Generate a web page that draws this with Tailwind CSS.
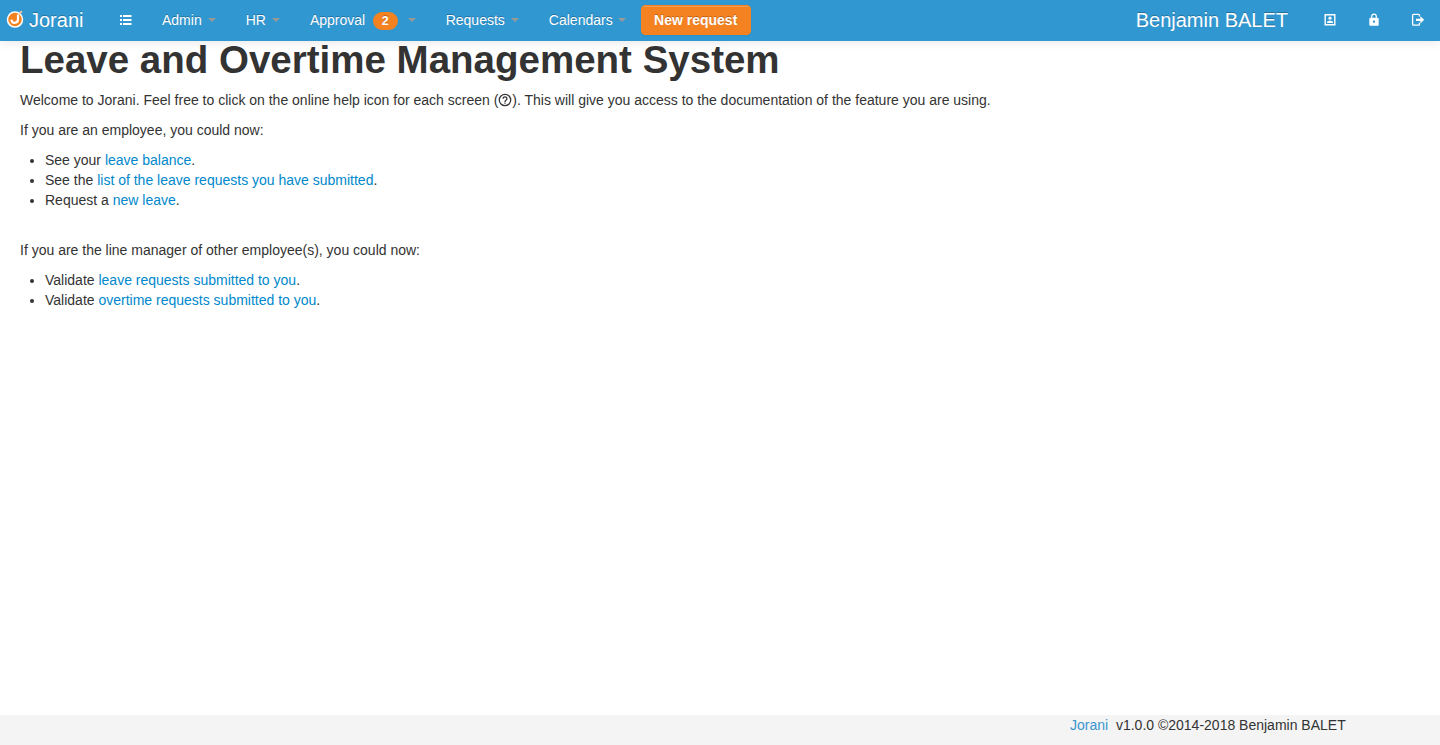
<!DOCTYPE html>
<html lang="en">
<head>
<meta charset="utf-8">
<title>Jorani</title>
<script src="https://cdn.jsdelivr.net/npm/@tailwindcss/browser@4"></script>
</head>
<body class="flex h-screen flex-col overflow-hidden bg-white font-['Liberation_Sans',Arial,sans-serif] text-sm/5 text-[#333]">
<header class="relative flex h-[41px] shrink-0 items-start bg-[#3097d1] text-white shadow-[0_1px_10px_rgba(0,0,0,0.1)] [text-shadow:0_-1px_0_rgba(0,0,0,0.25)]">
  <a class="flex h-10 w-[104px] items-center pl-1.5 text-xl/5">
    <svg class="-mt-0.5 mr-[5px] size-[18px]" viewBox="0 0 18 18" fill="none">
      <circle cx="9" cy="9.6" r="7.5" fill="#f58220" stroke="#fff" stroke-width="1.5"/>
      <path d="M12 4.5V9.3C12 14 5.7 13.8 5.4 9.6" stroke="#fff" stroke-width="2.2"/>
      <path d="M13.2 3.4L16 1.4" stroke="#e0c3b0" stroke-width="2"/>
    </svg>Jorani
  </a>
  <nav class="flex h-10 items-center">
    <a class="pr-[14px] pl-[15px]"><svg class="size-[14px]" viewBox="0 0 14 14" fill="#fff"><path d="M1 2h2v2H1zM4 2h8.5v2H4zM1 6h2v2H1zM4 6h8.5v2H4zM1 10h2v2H1zM4 10h8.5v2H4z"/></svg></a>
    <a class="flex items-center px-[15px]">Admin<i class="ml-1.5 size-0 border-x-4 border-t-4 border-x-transparent border-t-[#999]"></i></a>
    <a class="flex items-center px-[15px]">HR<i class="ml-1.5 size-0 border-x-4 border-t-4 border-x-transparent border-t-[#999]"></i></a>
    <a class="flex items-center px-[15px]">Approval<span class="relative top-px ml-[7.5px] h-[18px] w-[25px] rounded-[9px] bg-[#f58220] text-center text-[12.5px]/[18px] font-bold">2</span><i class="ml-[10px] size-0 border-x-4 border-t-4 border-x-transparent border-t-[#999]"></i></a>
    <a class="flex items-center px-[15px]">Requests<i class="ml-1.5 size-0 border-x-4 border-t-4 border-x-transparent border-t-[#999]"></i></a>
    <a class="flex items-center pr-[15px] pl-[15px]">Calendars<i class="ml-[5px] size-0 border-x-4 border-t-4 border-x-transparent border-t-[#999]"></i></a>
    <a class="h-[30px] w-[110px] rounded border border-[#f58220] bg-[#f58220] text-center leading-7 font-bold shadow-[inset_0_1px_0_rgba(255,255,255,0.2),0_1px_2px_rgba(0,0,0,0.05)]">New request</a>
  </nav>
  <div class="ml-auto flex h-10 items-center pr-[15px]">
    <span class="mr-[35px] text-xl/5">Benjamin BALET</span>
    <svg class="mr-[30px] size-[14px]" viewBox="0 0 14 14" fill="none"><path d="M2.2 1.7h9.6v10.1H2.2z" stroke="#fff" stroke-width="1.4"/><circle cx="7" cy="5.2" r="1.6" fill="#fff"/><path d="M4 10V9.2C4 7.2 10 7.2 10 9.2V10z" fill="#fff"/></svg>
    <svg class="mr-[30px] size-[14px]" viewBox="0 0 24 24" fill="#fff"><path d="M12 17a2 2 0 0 0 2-2 2 2 0 0 0-4 0 2 2 0 0 0 2 2m6-9a2 2 0 0 1 2 2v10a2 2 0 0 1-2 2H6a2 2 0 0 1-2-2V10a2 2 0 0 1 2-2h1V6a5 5 0 0 1 10 0v2h1m-6-5a3 3 0 0 0-3 3v2h6V6a3 3 0 0 0-3-3z"/></svg>
    <svg class="size-[14px]" viewBox="0 0 14 14" fill="none"><path d="M8.5 3.6V2.2Q8.5 1.3 7.6 1.3H2.5Q1.6 1.3 1.6 2.2V11.2Q1.6 12.1 2.5 12.1H7.6Q8.5 12.1 8.5 11.2V9.8" stroke="#fff" stroke-width="1.3"/><path d="M5 5.7h4.4V3.2L13.2 6.8 9.4 10.4V7.9H5z" fill="#fff"/></svg>
  </div>
</header>
<main class="flex-1 px-5">
  <h1 class="-mt-px mb-[10px] text-[38.5px]/[40px] font-bold">Leave and Overtime Management System</h1>
  <p class="mb-[10px]">Welcome to Jorani. Feel free to click on the online help icon for each screen (<svg class="inline size-[14px] align-[-2px]" viewBox="1 1 22 22" fill="#333"><path d="M11 18h2v-2h-2v2m1-16A10 10 0 0 0 2 12a10 10 0 0 0 20 0A10 10 0 0 0 12 2m0 18a8 8 0 1 1 0-16 8 8 0 0 1 0 16m0-14a4 4 0 0 0-4 4h2a2 2 0 0 1 4 0c0 2-3 1.75-3 5h2c0-2.25 3-2.5 3-5a4 4 0 0 0-4-4z"/></svg>). This will give you access to the documentation of the feature you are using.</p>
  <p class="mb-[10px]">If you are an employee, you could now:</p>
  <ul class="mb-[30px] ml-[25px] list-disc">
    <li>See your <a class="text-[#08c]">leave balance</a>.</li>
    <li>See the <a class="text-[#08c]">list of the leave requests you have submitted</a>.</li>
    <li>Request a <a class="text-[#08c]">new leave</a>.</li>
  </ul>
  <p class="mb-[10px]">If you are the line manager of other employee(s), you could now:</p>
  <ul class="ml-[25px] list-disc">
    <li>Validate <a class="text-[#08c]">leave requests submitted to you</a>.</li>
    <li>Validate <a class="text-[#08c]">overtime requests submitted to you</a>.</li>
  </ul>
</main>
<footer class="h-[30px] shrink-0 bg-[#f4f4f4] pl-[1070px] whitespace-nowrap"><a class="text-[#3a96d0]">Jorani</a>&nbsp; v1.0.0 ©2014-2018 Benjamin BALET</footer>
</body>
</html>
